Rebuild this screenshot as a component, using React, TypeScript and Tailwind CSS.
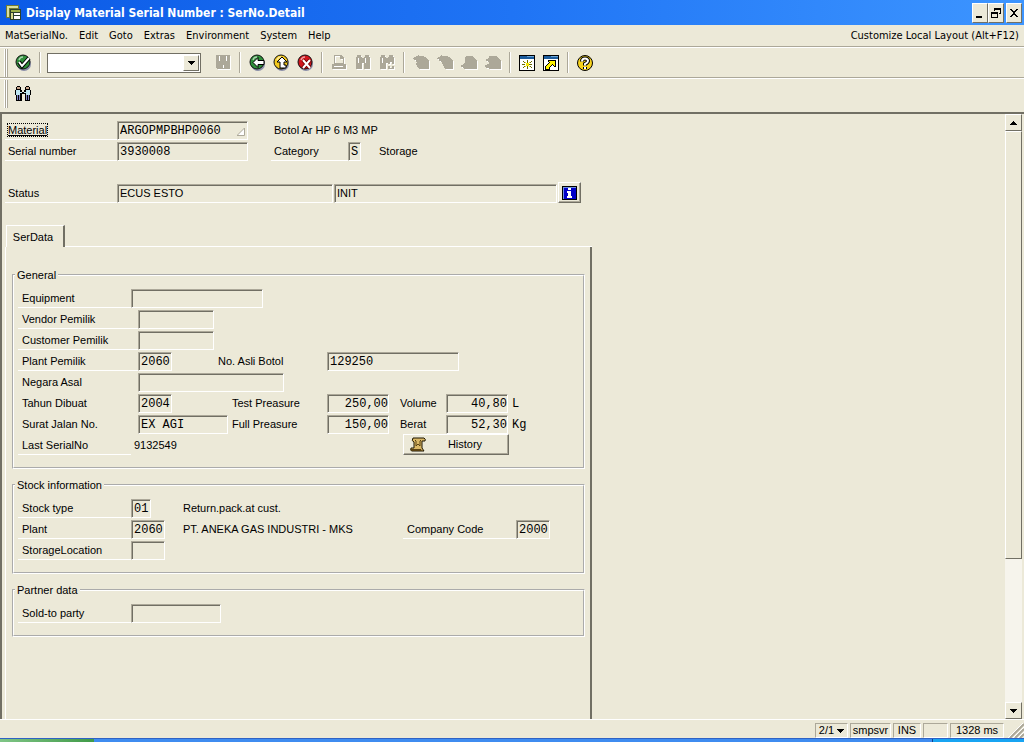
import type { ReactNode } from "react";
import { clsx } from "clsx";

const MENU = ["MatSerialNo.", "Edit", "Goto", "Extras", "Environment", "System", "Help"];

export default function App() {
  return (
    <div className="flex h-screen w-full flex-col overflow-hidden bg-[#ece9d8] font-['Liberation_Sans',Arial,sans-serif] text-[11px] text-black">
      <TitleBar />
      <MenuBar />
      <Toolbar />
      <div className="flex h-[34px] shrink-0 items-center border-t border-white pb-[3px]">
        <Grip />
        <ToolButton label="Find objects">
          <PeopleIcon />
        </ToolButton>
      </div>
      <div className="flex min-h-0 flex-1 border-l-2 border-t-2 border-[#716f64]">
        <main className="min-w-0 flex-1 overflow-hidden">
          <Detail />
        </main>
        <ScrollBar />
      </div>
      <StatusBar />
      <TaskBar />
    </div>
  );
}

function TitleBar() {
  return (
    <header className="flex h-[25px] shrink-0 items-center bg-gradient-to-r from-[#0b5ae6] via-[#1f74f5] to-[#3d95ff] pl-[6px] pr-[2px]">
      <svg width="15" height="15" viewBox="0 0 15 15" shapeRendering="crispEdges" aria-hidden="true">
        <path d="M0 0h13v4H4v9H0z" fill="#6f7a34" />
        <path d="M1 1h11v2H3v9H1z" fill="#d9dfa0" />
        <path d="M4 4h11v11H4z" fill="#2b3f2c" />
        <path d="M5 5h9v2H5z" fill="#9cb04a" />
        <path d="M5 8h2v6H5z" fill="#d6d98a" />
        <path d="M8 8h6v2H8zM8 11h6v3H8z" fill="#fff" />
      </svg>
      <h1 className="ml-[5px] flex-1 whitespace-nowrap font-['DejaVu_Sans_Condensed','DejaVu_Sans',sans-serif] text-[12px] font-bold text-white">
        Display Material Serial Number : SerNo.Detail
      </h1>
      <div className="flex">
        <WindowButton label="Minimize">
          <path d="M3 10h6v2H3z" />
        </WindowButton>
        <WindowButton label="Restore">
          <path d="M5 2h7v6h-2V7h1V4H6v1H5zM2 6h7v6H2zM3 8v3h5V8z" fillRule="evenodd" />
        </WindowButton>
        <div className="w-[2px]" />
        <WindowButton label="Close">
          <path d="M3 3h2v1h1v1h2V4h1V3h2v1h-1v1H9v1H8v2h1v1h1v1h1v1H9v-1H8V9H6v1H5v1H3v-1h1V9h1V8h1V6H5V5H4V4H3z" />
        </WindowButton>
      </div>
    </header>
  );
}

function WindowButton({ label, children }: { label: string; children: ReactNode }) {
  return (
    <button
      aria-label={label}
      className="grid h-[20px] w-[16px] place-items-center border border-b-[#716f64] border-l-white border-r-[#716f64] border-t-white bg-[#ece9d8]"
    >
      <svg width="14" height="14" viewBox="0 0 14 14" shapeRendering="crispEdges" aria-hidden="true">
        {children}
      </svg>
    </button>
  );
}

function MenuBar() {
  return (
    <nav className="flex h-[22px] shrink-0 items-center gap-[11px] border-b border-[#aca899] px-[5px] pt-px font-['DejaVu_Sans_Condensed','DejaVu_Sans',sans-serif] text-[11px]">
      {MENU.map((item) => (
        <button key={item}>{item}</button>
      ))}
      <button className="ml-auto whitespace-nowrap">Customize Local Layout (Alt+F12)</button>
    </nav>
  );
}

function Toolbar() {
  return (
    <div className="flex h-[31px] shrink-0 items-center border-b border-t border-b-[#aca899] border-t-white">
      <Grip />
      <ToolButton label="Enter">
        <Ball fill="#2f8f3a">
          <path d="M4 8l3 4 7-8" fill="none" stroke="#000" strokeWidth="4" />
          <path d="M4 8l3 4 7-8" fill="none" stroke="#fff" strokeWidth="2" />
        </Ball>
      </ToolButton>
      <Divider />
      <div className="ml-[2px] mr-[10px] flex h-[20px] w-[154px] border border-[#716f64] bg-white p-px">
        <input aria-label="Command field" className="min-w-0 flex-1 px-1 outline-none" />
        <button
          aria-label="Command history"
          className="grid w-[16px] place-items-center border border-b-[#716f64] border-l-white border-r-[#716f64] border-t-white bg-[#ece9d8]"
        >
          <Arrow dir="down" />
        </button>
      </div>
      <ToolButton label="Save">
        <Dim d="M1 1h14v14H2l-1-1zM4 2v5h1V2zM11 2v5h1V2zM8 11v3h1v-3z" />
      </ToolButton>
      <Divider />
      <ToolButton label="Back">
        <Ball fill="#2f8f3a">
          <path d="M4 8.500l5-5v3h6v4H9v3z" fill="#fff" stroke="#000" strokeWidth="1" />
        </Ball>
      </ToolButton>
      <ToolButton label="Exit">
        <Ball fill="#f2c81e">
          <path d="M9 3l5 5h-3v3h2v3H7V8H4z" fill="#fff" stroke="#000" strokeWidth="1" />
        </Ball>
      </ToolButton>
      <ToolButton label="Cancel">
        <Ball fill="#d0151c">
          <path d="M6 6l7 8M13 6l-7 8" stroke="#700" strokeWidth="4" />
          <path d="M6 6l7 8M13 6l-7 8" stroke="#fff" strokeWidth="2" />
        </Ball>
      </ToolButton>
      <Divider />
      <ToolButton label="Print">
        <Dim d="M3 1h7l3 3v6h2v5H1v-5h2zM4 2v7h8V5H9V2zM3 12v1h9v-1z" />
      </ToolButton>
      <ToolButton label="Find">
        <Dim d="M2 1h4v2h1v1h2V3h1V1h4v2h1v12H9V9H7v6H1V3h1zM3 4v5h1V4zM10 4v5h1V4z" />
      </ToolButton>
      <ToolButton label="Find next">
        <Dim d="M2 1h4v2h1v1h2V3h1V1h4v2h1v12H9V9H7v6H1V3h1zM3 4v5h1V4zM11 8v2H9v2h2v2h2v-2h2v-2h-2V8z" />
      </ToolButton>
      <Divider />
      <ToolButton label="First page">
        <Dim d="M0 4h1V3h2V2h2V1h1v1h5v1h2v1h1v1h1v1h1v9H6v-1H5v-1H4v-2H3V9h1V8H3V6H1V5H0z" />
      </ToolButton>
      <ToolButton label="Previous page">
        <Dim d="M0 4h1V3h2V2h1V1h1v1h6v1h2v1h1v1h1v1h1v9H8v-1H7v-2H6v-2H5V8H4V7H2V5H0z" />
      </ToolButton>
      <ToolButton label="Next page">
        <Dim d="M4 3h1V2h7v1h1v1h1v1h1v1h1v9H3v-1H2v-1H0v-2h2v-1h1V9h1z" />
      </ToolButton>
      <ToolButton label="Last page">
        <Dim d="M1 5h2V4h1V2h8v1h1v1h1v1h1v1h1v9H4v-1H1v-1H0v-2h2v-1h2V8H3V7H1z" />
      </ToolButton>
      <Divider />
      <ToolButton label="Create session">
        <WindowIcon>
          <path
            d="M8 5h1v3H8zM8 11h1v3H8zM3 9h3v1H3zM10 9h3v1h-3zM4 6h1v1H4zM5 7h1v1H5zM11 7h1v1h-1zM12 6h1v1h-1zM5 11h1v1H5zM4 12h1v1H4zM11 11h1v1h-1zM12 12h1v1h-1z"
            fill="#6b6b00"
          />
          <path d="M7 8h3v3H7zM6 7h1v1H6zM10 7h1v1h-1zM6 11h1v1H6zM10 11h1v1h-1z" fill="#f4e600" />
        </WindowIcon>
      </ToolButton>
      <ToolButton label="Create shortcut">
        <WindowIcon>
          <path d="M5 5h8v7h-2v-1h-1v-1H9v1H8v1H7v3H2v-4h1v-1h1V9h1V8h1V7H5z" />
          <path d="M6 6h6v5h-1v-1h-1V9H9v1H8v1H7v1H6v2H3v-3h1v-1h1V9h1V8h1V7H6z" fill="#fff200" />
        </WindowIcon>
      </ToolButton>
      <Divider />
      <ToolButton label="Help">
        <svg width="18" height="18" viewBox="0 0 18 18" aria-hidden="true">
          <circle cx="9" cy="9" r="7.500" fill="#f7d21c" stroke="#000" />
          <path d="M6 7.500q0-3 3-3t3 2.500q0 1.500-3 3v1.500M9 13v2" fill="none" stroke="#000" strokeWidth="4" />
          <path d="M6 7.500q0-3 3-3t3 2.500q0 1.500-3 3v1.500M9 13v2" fill="none" stroke="#fff" strokeWidth="2" />
        </svg>
      </ToolButton>
    </div>
  );
}

function Grip() {
  return (
    <div className="ml-1 mr-[3px] flex h-[28px] w-1">
      <span className="w-[2px] border-l border-r border-l-white border-r-[#aca899]" />
      <span className="w-[2px] border-l border-r border-l-white border-r-[#aca899]" />
    </div>
  );
}

function Divider() {
  return (
    <div className="flex w-[10px] justify-center">
      <span className="h-[21px] w-[2px] border-l border-r border-l-[#aca899] border-r-white" />
    </div>
  );
}

function ToolButton({ label, children }: { label: string; children: ReactNode }) {
  return (
    <button aria-label={label} className="grid h-6 w-6 place-items-center">
      {children}
    </button>
  );
}

function Ball({ fill, children }: { fill: string; children: ReactNode }) {
  return (
    <svg width="17" height="17" viewBox="0 0 17 17" aria-hidden="true">
      <circle cx="9" cy="10" r="7" fill="#8a8fa8" />
      <circle cx="8" cy="8" r="7" fill={fill} stroke="#111" />
      <path d="M4 6q1-3 4-3" fill="none" stroke="#fff" strokeOpacity="0.6" strokeWidth="1.500" />
      {children}
    </svg>
  );
}

// disabled icon: grey shape over a white copy shifted down and right
function Dim({ d }: { d: string }) {
  return (
    <svg width="17" height="17" viewBox="0 0 17 17" shapeRendering="crispEdges" aria-hidden="true">
      <path d={d} transform="translate(1 1)" fill="#fff" fillRule="evenodd" />
      <path d={d} fill="#aca899" fillRule="evenodd" />
    </svg>
  );
}

function WindowIcon({ children }: { children: ReactNode }) {
  return (
    <svg width="16" height="16" viewBox="0 0 16 16" shapeRendering="crispEdges" aria-hidden="true">
      <path d="M0 0h16v16H0z" />
      <path d="M1 1h14v3H1z" fill="#1c5c9c" />
      <path d="M8 1h7v1H8z" fill="#6aa5d8" />
      <path d="M1 4h14v11H1z" fill="#fff" />
      {children}
    </svg>
  );
}

function PeopleIcon() {
  return (
    <svg width="16" height="16" viewBox="0 0 16 16" shapeRendering="crispEdges" aria-hidden="true">
      <path d="M2 0h3v1h1v3h1v2h2V4h1V1h1V0h3v1h1v3h1v5h-1v6h-5V8H7v7H1V9H0V4h1V1h1z" />
      <path d="M2 1h3v2H2zM11 1h3v2h-3z" fill="#c9a58c" />
      <path d="M1 4h4v5H1zM11 4h4v5h-4zM5 6h2v1H5zM9 6h2v1H9z" fill="#bfe6f2" />
      <path d="M2 9h1v5H2zM4 9h1v5H4zM11 9h1v5h-1zM13 9h1v5h-1z" fill="#8487c4" />
    </svg>
  );
}

function Arrow({ dir }: { dir: "up" | "down" }) {
  return (
    <svg width="7" height="4" viewBox="0 0 7 4" shapeRendering="crispEdges" aria-hidden="true">
      <path d={dir === "up" ? "M3 0h1v1h1v1h1v1h1v1H0V3h1V2h1V1h1z" : "M0 0h7v1H6v1H5v1H4v1H3V3H2V2H1V1H0z"} />
    </svg>
  );
}

function Detail() {
  return (
    <div className="flex h-full flex-col pl-[3px] pt-[5px]">
      <Row>
        <Label htmlFor="material" className="w-[112px] pl-[3px]">
          <span className="underline outline-1 outline-dotted outline-black">Material</span>
        </Label>
        <div className="relative">
          <Field id="material" value="ARGOPMPBHP0060" className="w-[131px]" />
          <svg className="absolute bottom-1 right-[3px]" width="8" height="8" viewBox="0 0 8 8" aria-hidden="true">
            <path d="M0 7.500L7.500 0V7.500z" fill="#fff" stroke="#aca899" />
          </svg>
        </div>
        <Text className="ml-[26px]">Botol Ar HP 6 M3 MP</Text>
      </Row>
      <Row>
        <Label htmlFor="serial" className="w-[112px] pl-[3px]">Serial number</Label>
        <Field id="serial" value="3930008" className="w-[131px]" />
        <Label htmlFor="category" className="ml-[23px] w-[77px] pl-[3px]">Category</Label>
        <Field id="category" value="S" className="w-[13px]" />
        <Text className="ml-[18px]">Storage</Text>
      </Row>
      <Row />
      <Row>
        <Label htmlFor="status" className="w-[112px] pl-[3px]">Status</Label>
        <Field id="status" value="ECUS ESTO" className="w-[216px]" sans />
        <Field label="User status" value="INIT" className="ml-px w-[223px]" sans />
        <button
          aria-label="Status information"
          className="ml-px grid h-[21px] w-[23px] place-items-center border border-b-[#716f64] border-l-white border-r-[#716f64] border-t-white shadow-[inset_-1px_-1px_0_#aca899]"
        >
          <svg width="15" height="14" viewBox="0 0 15 14" shapeRendering="crispEdges" aria-hidden="true">
            <path d="M0 0h15v14H0z" />
            <path d="M1 1h13v12H1z" fill="#6f8fe0" />
            <path d="M2 2h12v11H2z" fill="#0000c8" />
            <path d="M6 2h3v2H6zM5 5h4v5h1v2H5v-2h1V7H5z" fill="#fff" />
          </svg>
        </button>
      </Row>

      <div role="tablist" className="mt-[22px] flex h-[22px] pl-px">
        <button
          role="tab"
          aria-selected="true"
          className="h-[22px] w-[59px] border-l border-r-2 border-t border-l-white border-r-[#716f64] border-t-white pr-1 pt-[2px]"
        >
          SerData
        </button>
        <div className="w-[527px] border-b border-white" />
      </div>
      <div role="tabpanel" className="flex w-[587px] flex-1 flex-col gap-[9px] border-l border-r-2 border-l-white border-r-[#716f64] pl-[6px] pr-[5px] pt-[21px]">
        <Group title="General">
          <Row>
            <Label htmlFor="equipment" className="w-[113px]">Equipment</Label>
            <Field id="equipment" className="w-[132px]" />
          </Row>
          <Row>
            <Label htmlFor="vendor" className="w-[120px]">Vendor Pemilik</Label>
            <Field id="vendor" className="w-[76px]" />
          </Row>
          <Row>
            <Label htmlFor="customer" className="w-[120px]">Customer Pemilik</Label>
            <Field id="customer" className="w-[76px]" />
          </Row>
          <Row>
            <Label htmlFor="plant-owner" className="w-[120px]">Plant Pemilik</Label>
            <Field id="plant-owner" value="2060" className="w-[34px]" />
            <Label htmlFor="bottle" className="ml-[42px] w-[113px]" plain>No. Asli Botol</Label>
            <Field id="bottle" value="129250" className="w-[132px]" />
          </Row>
          <Row>
            <Label htmlFor="country" className="w-[120px]" plain>Negara Asal</Label>
            <Field id="country" className="w-[146px]" />
          </Row>
          <Row>
            <Label htmlFor="year" className="w-[120px]" plain>Tahun Dibuat</Label>
            <Field id="year" value="2004" className="w-[34px]" />
            <Label htmlFor="test" className="ml-[56px] w-[99px]" plain>Test Preasure</Label>
            <Field id="test" value="250,00" className="w-[62px] text-right" />
            <Label htmlFor="volume" className="ml-[7px] w-[50px]" plain>Volume</Label>
            <Field id="volume" value="40,80" className="w-[62px] text-right" />
            <Unit>L</Unit>
          </Row>
          <Row>
            <Label htmlFor="letter" className="w-[120px]" plain>Surat Jalan No.</Label>
            <Field id="letter" value="EX AGI" className="w-[90px]" />
            <Label htmlFor="full" className="w-[99px]" plain>Full Preasure</Label>
            <Field id="full" value="150,00" className="w-[62px] text-right" />
            <Label htmlFor="weight" className="ml-[7px] w-[50px]" plain>Berat</Label>
            <Field id="weight" value="52,30" className="w-[62px] text-right" />
            <Unit>Kg</Unit>
          </Row>
          <Row>
            <span className="h-[21px] w-[113px] border-b border-white pl-1 leading-[22px]">Last SerialNo</span>
            <Text className="ml-[3px] w-[269px]">9132549</Text>
            <button className="flex h-[21px] w-[106px] items-center border border-b-[#716f64] border-l-white border-r-[#716f64] border-t-white pl-[6px] shadow-[inset_-1px_-1px_0_#aca899]">
              <svg width="16" height="15" viewBox="0 0 16 15" aria-hidden="true">
                <path d="M3 1h11q2 1 1 3h-3v7l2 3H2q-2 0-1-3h3V5Q1 4 3 1z" fill="#d9b766" stroke="#1c1400" />
                <path d="M1 12h10q0 2 2 2H2q-1 0-1-2z" fill="#5a4212" />
                <path d="M6 4v5l2-2 2 2V4M5 3l1 1M11 3l-1 1" fill="none" stroke="#5a4212" />
              </svg>
              <span className="flex-1 pl-2 pr-3 text-center">History</span>
            </button>
          </Row>
        </Group>
        <Group title="Stock information">
          <Row>
            <Label htmlFor="stock-type" className="w-[113px]">Stock type</Label>
            <Field id="stock-type" value="01" className="w-[20px]" />
            <Text className="ml-[32px]">Return.pack.at cust.</Text>
          </Row>
          <Row>
            <Label htmlFor="plant" className="w-[113px]">Plant</Label>
            <Field id="plant" value="2060" className="w-[34px]" />
            <Text className="ml-[18px] w-[220px]">PT. ANEKA GAS INDUSTRI - MKS</Text>
            <Label htmlFor="company" className="w-[113px]">Company Code</Label>
            <Field id="company" value="2000" className="w-[34px]" />
          </Row>
          <Row>
            <Label htmlFor="storage" className="w-[113px]">StorageLocation</Label>
            <Field id="storage" className="w-[34px]" />
          </Row>
        </Group>
        <Group title="Partner data">
          <Row>
            <Label htmlFor="sold-to" className="w-[113px]">Sold-to party</Label>
            <Field id="sold-to" className="w-[90px]" />
          </Row>
        </Group>
      </div>
    </div>
  );
}

function Group({ title, children }: { title: string; children: ReactNode }) {
  return (
    <fieldset className="border-2 border-white pb-3 pl-1 [border-style:groove]">
      <legend className="-ml-[3px] mb-[5px] px-[2px] leading-[14px]">{title}</legend>
      {children}
    </fieldset>
  );
}

function Row({ children }: { children?: ReactNode }) {
  return <div className="flex h-[21px] shrink-0 items-end whitespace-nowrap">{children}</div>;
}

function Label({
  htmlFor,
  className,
  plain,
  children,
}: {
  htmlFor: string;
  className: string;
  plain?: boolean;
  children: ReactNode;
}) {
  return (
    <label
      htmlFor={htmlFor}
      className={clsx("h-[21px] shrink-0 border-b pl-1 leading-[22px]", plain ? "border-transparent" : "border-white", className)}
    >
      {children}
    </label>
  );
}

function Text({ className, children }: { className: string; children: ReactNode }) {
  return <span className={clsx("h-[21px] shrink-0 leading-[22px]", className)}>{children}</span>;
}

function Unit({ children }: { children: ReactNode }) {
  return <span className="ml-1 h-[19px] font-['Liberation_Mono',monospace] text-[12px] leading-[20px]">{children}</span>;
}

function Field({
  id,
  label,
  value = "",
  className,
  sans,
}: {
  id?: string;
  label?: string;
  value?: string;
  className: string;
  sans?: boolean;
}) {
  return (
    <input
      id={id}
      aria-label={label}
      value={value}
      readOnly
      className={clsx(
        "block h-[19px] shrink-0 border border-b-white border-l-[#aca899] border-r-white border-t-[#aca899] bg-transparent pl-[2px] shadow-[inset_1px_1px_0_#716f64] outline-none",
        sans ? "pb-px text-[11px]" : "font-['Liberation_Mono',monospace] text-[12px]",
        className
      )}
    />
  );
}

function ScrollBar() {
  const button =
    "grid h-[17px] shrink-0 place-items-center border border-b-[#716f64] border-l-white border-r-[#716f64] border-t-white bg-[#ece9d8]";
  return (
    <div className="mr-[2px] flex w-[17px] shrink-0 flex-col bg-[#f6f4ec]">
      <button aria-label="Scroll up" className={button}>
        <Arrow dir="up" />
      </button>
      <div className="flex-1">
        <div className="h-3/4 border border-b-[#716f64] border-l-white border-r-[#716f64] border-t-white bg-[#ece9d8]" />
      </div>
      <button aria-label="Scroll down" className={button}>
        <Arrow dir="down" />
      </button>
    </div>
  );
}

function StatusBar() {
  const cell =
    "flex h-[15px] items-center justify-center border border-b-white border-l-[#aca899] border-r-white border-t-[#aca899] leading-[13px]";
  return (
    <footer className="flex h-[19px] shrink-0 items-end justify-end gap-[2px] border-t border-white">
      <button className={clsx(cell, "w-[33px] gap-[3px]")}>
        2/1
        <Arrow dir="down" />
      </button>
      <span className={clsx(cell, "w-[41px]")}>smpsvr</span>
      <span className={clsx(cell, "w-[28px]")}>INS</span>
      <span className={clsx(cell, "w-[25px]")} />
      <span className={clsx(cell, "w-[54px]")}>1328 ms</span>
      <svg className="ml-[2px]" width="16" height="15" viewBox="0 0 16 15" aria-hidden="true">
        <path d="M2 15L16 1M7 15L16 6M12 15l4-4" stroke="#aca899" strokeWidth="2" />
        <path d="M0 15L15 0M5 15L16 4M10 15l6-6" stroke="#fff" />
      </svg>
    </footer>
  );
}

function TaskBar() {
  return (
    <div className="flex h-1 shrink-0 border-t border-[#2f62c4] bg-[#3f8cf0]">
      <div className="w-[94px] bg-gradient-to-r from-[#7fc586] to-[#3f9a48]" />
      <div className="ml-auto w-[92px] border-l border-[#0f3f8c] bg-[#18a4f2]" />
    </div>
  );
}
